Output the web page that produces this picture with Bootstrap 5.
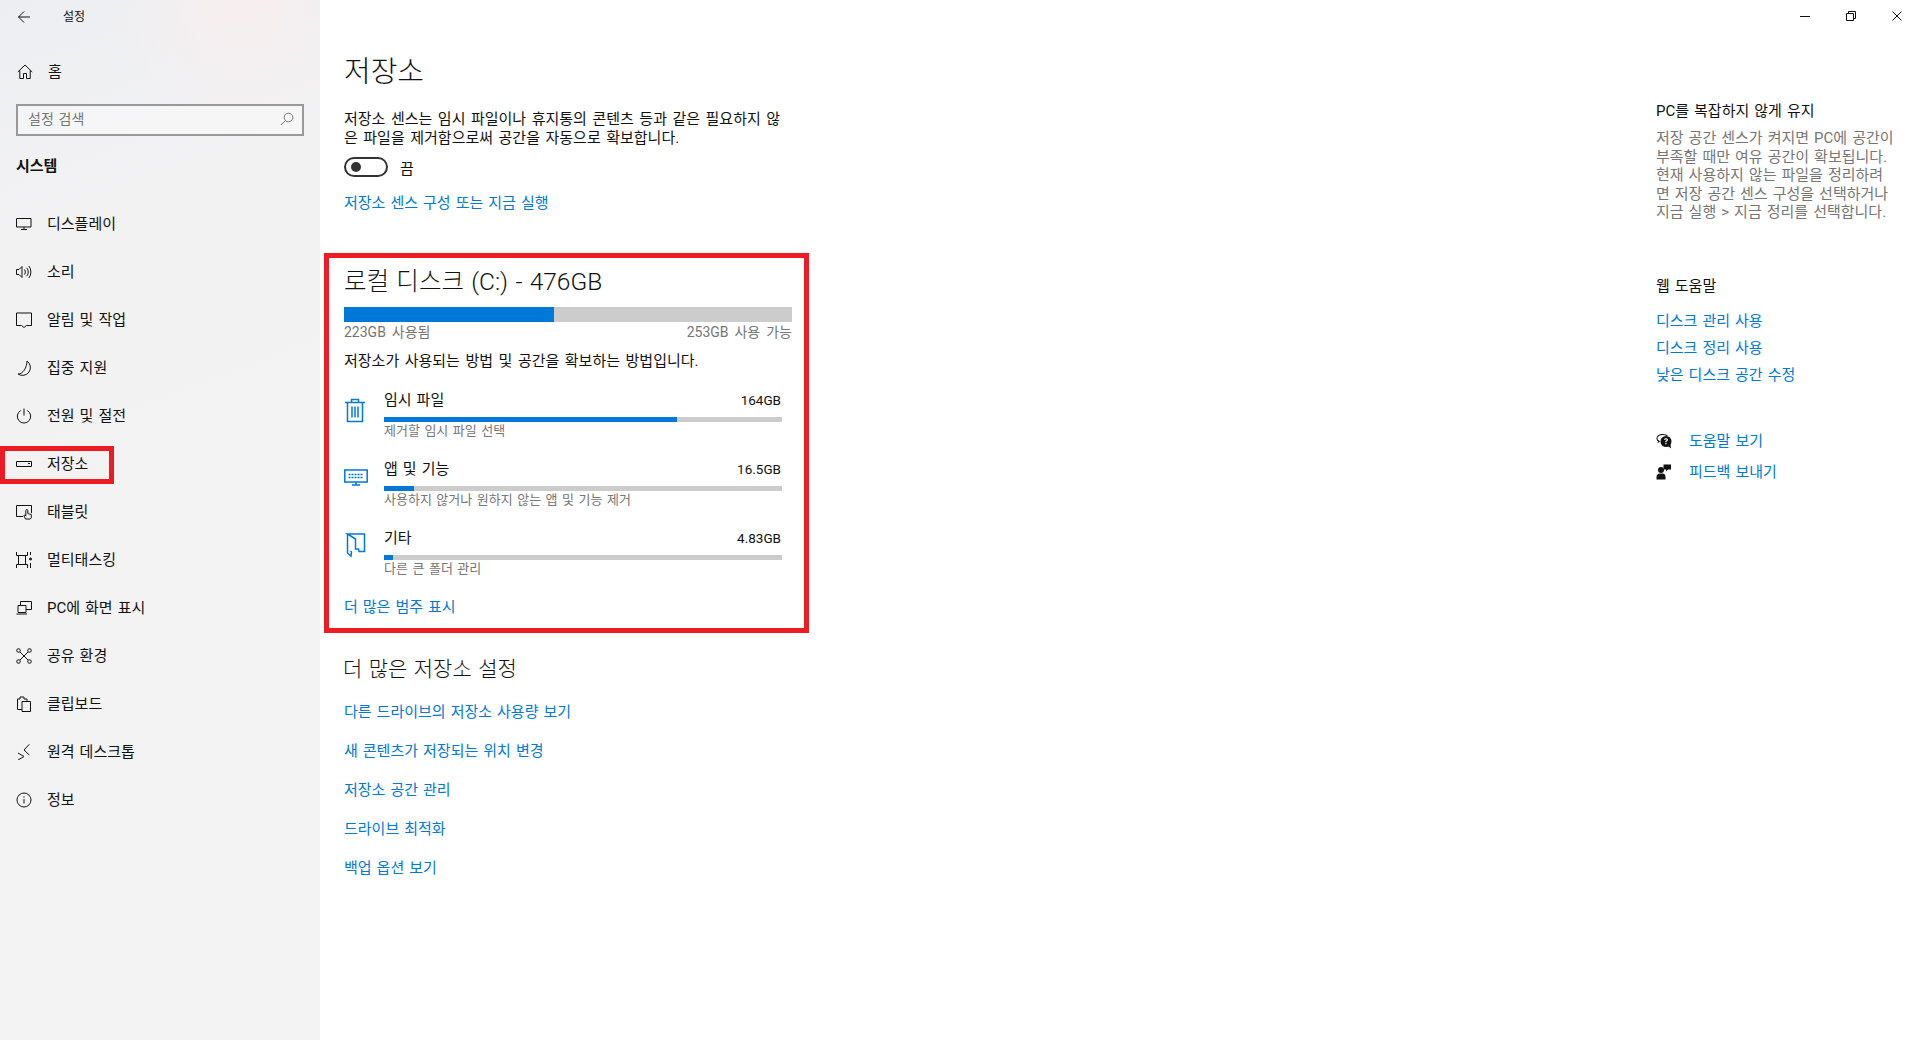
<!DOCTYPE html>
<html lang="ko">
<head>
  <meta charset="UTF-8">
  <meta name="viewport" content="width=device-width, initial-scale=1.0">
  <title>설정 - 저장소</title>
  <link href="https://cdn.jsdelivr.net/npm/bootstrap@5.3.0/dist/css/bootstrap.min.css" rel="stylesheet">
  <style>
    html, body { height: 100%; }
    body {
      height: 1040px;
      overflow: hidden;
      background: #fff;
      color: #111;
      font-family: Roboto, "Noto Sans CJK KR", sans-serif;
      font-size: 15px;
      line-height: 20px;
      word-spacing: 1.3px;
    }
    a { color: #0078d7; text-decoration: none; }
    svg { display: block; flex: none; fill: none; stroke: currentColor; stroke-width: 1; }

    /* sidebar */
    .side-pane {
      width: 320px;
      flex: none;
      padding: 0 16px;
      background:
        radial-gradient(circle at 240px 0, #f7eeee 0, rgba(247,238,238,0) 130px),
        linear-gradient(160deg, #eceef1 0, #f2f2f3 220px, #f3f3f3 100%);
    }
    .side-title { height: 32px; font-size: 12px; padding-top: 1px; }
    .side-title span { margin-left: 32px; }
    .side-title svg { margin-left: 1px; }
    .side-home { height: 48px; margin-top: 16px; margin-bottom: 8px; color: #111; }
    .side-home svg { margin-left: 1px; margin-right: 15px; }
    .side-link svg { margin-right: 15px; }
    .side-search {
      height: 32px;
      border: 2px solid #999;
      padding: 0 8px 2px 10px;
      color: #767676;
      font-size: 14px;
      background: rgba(255,255,255,.35);
    }
    .side-group { font-weight: 700; margin-top: 20px; height: 20px; margin-bottom: 24px; }
    .side-link { height: 48px; position: relative; color: #111; }
    .side-mark {
      position: absolute;
      left: -16px;
      top: 6px;
      width: 114px;
      height: 38px;
      border: 5px solid #ed1c24;
    }

    /* content */
    .main-col { width: 1336px; flex: none; padding-left: 24px; }
    .page-title { font-size: 29px; line-height: 40px; font-weight: 300; margin: 52px 0 0; }
    .intro { margin: 18px 0 0; line-height: 19px; word-spacing: 1.8px; }
    .toggle-row { margin-top: 9px; height: 20px; }
    .toggle-row span:last-child { padding-top: 3px; }
    .toggle-off {
      width: 44px;
      height: 20px;
      border: 2px solid #333;
      border-radius: 10px;
      padding-left: 5px;
      margin-right: 12px;
    }
    .toggle-off i { width: 10px; height: 10px; border-radius: 50%; background: #333; display: block; }
    .top-link { margin-top: 16px; }

    .disk-box {
      width: 485px;
      margin: 40px 0 0 -20px;
      border: 5px solid #ed1c24;
      padding: 8px 12px 11px 15px;
    }
    .disk-title { font-size: 24.5px; line-height: 32px; font-weight: 300; margin: 0; }
    .usage-bar { height: 15px; margin-top: 9px; }
    .thin-bar { height: 5px; margin-top: 7px; }
    .usage-bar, .thin-bar { background: #ccc; border-radius: 0; }
    .usage-bar .progress-bar, .thin-bar .progress-bar { background: #0078d7; }
    .usage-label { margin-top: 1px; font-size: 14px; line-height: 18px; color: #767676; word-spacing: 2.5px; }
    .usage-desc { margin: 10px 0 0; word-spacing: 1.8px; }
    .cat-list { margin-top: 19px; display: flex; flex-direction: column; gap: 19px; }
    .cat-icon { width: 40px; flex: none; color: #0078d7; }
    .cat-icon svg { stroke-width: 1.5; }
    .cat-body { width: 398px; }
    .cat-size { font-size: 13.5px; padding-right: 1px; }
    .cat-sub { font-size: 13px; line-height: 18px; color: #767676; }
    .more-link { margin-top: 19px; }

    .sub-title { font-size: 21px; line-height: 28px; font-weight: 300; margin: 22px 0 0 -1px; }
    .more-links { margin-top: 19px; gap: 19px; }

    /* right column */
    .help-col { flex-grow: 1; }
    .win-bar { height: 32px; }
    .win-btn { width: 46px; height: 32px; color: #111; }
    .tip-head { margin-top: 69px; }
    .tip-text { margin-top: 8px; line-height: 18.5px; color: #767676; }
    .web-head { margin-top: 54px; }
    .web-links { margin-top: 15px; gap: 7px; }
    .act-links { margin-top: 46px; gap: 11px; }
    .act-links svg { margin-right: 17px; fill: #111; stroke: none; }
  </style>
</head>
<body class="d-flex">

  <!-- sidebar -->
  <aside class="side-pane">
    <div class="side-title d-flex align-items-center">
      <svg width="14" height="14" viewBox="0 0 14 14"><path d="M13 7H1.500M7 1.500 1.500 7 7 12.500"/></svg>
      <span>설정</span>
    </div>
    <a class="side-home d-flex align-items-center" href="#">
      <svg width="16" height="16" viewBox="0 0 16 16"><path d="M.8 8 8 1l7.200 7M2.800 6.500v8h3.700V9.500h3v5h3.700v-8"/></svg>
      <span>홈</span>
    </a>
    <div class="side-search d-flex align-items-center justify-content-between">
      <span>설정 검색</span>
      <svg width="14" height="14" viewBox="0 0 14 14"><circle cx="8.500" cy="5.500" r="4.300"/><path d="M5.300 8.700 1 13"/></svg>
    </div>
    <div class="side-group">시스템</div>

    <nav class="d-flex flex-column">
      <a class="side-link d-flex align-items-center" href="#">
        <svg width="16" height="16" viewBox="0 0 16 16"><path d="M.5 2.500h14.500v8.500H.5zM8 11v2.500M5 13.500h6"/></svg>
        <span>디스플레이</span>
      </a>
      <a class="side-link d-flex align-items-center" href="#">
        <svg width="16" height="16" viewBox="0 0 16 16"><path d="M.5 5.500H3L6 2.500v11l-3-3H.5zM8.500 5.500a4 4 0 0 1 0 5M10.700 3.800a7 7 0 0 1 0 8.400M12.900 2a10 10 0 0 1 0 12"/></svg>
        <span>소리</span>
      </a>
      <a class="side-link d-flex align-items-center" href="#">
        <svg width="16" height="16" viewBox="0 0 16 16"><path d="M.5 1h15v12.500h-5L8 15.500l-2.500-2H.5z"/></svg>
        <span>알림 및 작업</span>
      </a>
      <a class="side-link d-flex align-items-center" href="#">
        <svg width="16" height="16" viewBox="0 0 16 16"><path d="M10 .5a7 7 0 0 1-9 13C6 13.500 10 7 10 .5z" transform="translate(1 .5)"/></svg>
        <span>집중 지원</span>
      </a>
      <a class="side-link d-flex align-items-center" href="#">
        <svg width="16" height="16" viewBox="0 0 16 16"><path d="M4.700 2.500a6.700 6.700 0 1 0 6.600 0M8 .5v7"/></svg>
        <span>전원 및 절전</span>
      </a>
      <a class="side-link d-flex align-items-center" href="#">
        <svg width="16" height="16" viewBox="0 0 16 16"><path d="M.5 5.500h15v5H.5zM12 7.500h2"/></svg>
        <span>저장소</span>
        <span class="side-mark"></span>
      </a>
      <a class="side-link d-flex align-items-center" href="#">
        <svg width="16" height="16" viewBox="0 0 16 16"><path d="M7 12.500H.5v-11h15V9M9.500 15 7.800 11.500l1-.5 1 1V6.500a1 1 0 0 1 2 0v3l3.500 1v3l-1 1.500z"/></svg>
        <span>태블릿</span>
      </a>
      <a class="side-link d-flex align-items-center" href="#">
        <svg width="16" height="16" viewBox="0 0 16 16"><path d="M.5 0v3.500h11V0M.5 16v-3.500h11V16M2.500 3.500v9M9.500 3.500v9M14.500 0v3M14.500 11v5"/><circle cx="14.500" cy="7" r="1" fill="currentColor"/></svg>
        <span>멀티태스킹</span>
      </a>
      <a class="side-link d-flex align-items-center" href="#">
        <svg width="16" height="16" viewBox="0 0 16 16"><path d="M4.500 5V1.500h11v8H10M2 5.500h8v7H2zM.5 14h10.500"/></svg>
        <span>PC에 화면 표시</span>
      </a>
      <a class="side-link d-flex align-items-center" href="#">
        <svg width="16" height="16" viewBox="0 0 16 16"><circle cx="2.500" cy="2.500" r="1.800"/><circle cx="13.500" cy="2.500" r="1.800"/><circle cx="2.500" cy="13.500" r="1.800"/><circle cx="13.500" cy="13.500" r="1.800"/><path d="M3.800 3.800l8.400 8.400M12.200 3.800l-8.400 8.400"/></svg>
        <span>공유 환경</span>
      </a>
      <a class="side-link d-flex align-items-center" href="#">
        <svg width="16" height="16" viewBox="0 0 16 16"><path d="M6 13.500H1.500V3H4V1h4v2h3v2.500M6 5.500h8.500v10H6z"/></svg>
        <span>클립보드</span>
      </a>
      <a class="side-link d-flex align-items-center" href="#">
        <svg width="16" height="16" viewBox="0 0 16 16"><path d="M2 9l6 3.500L2 16M13.300.3 8 6l5.300 5"/></svg>
        <span>원격 데스크톱</span>
      </a>
      <a class="side-link d-flex align-items-center" href="#">
        <svg width="16" height="16" viewBox="0 0 16 16"><circle cx="8" cy="8" r="7"/><path d="M8 7v4.500M8 4.200v1.300"/></svg>
        <span>정보</span>
      </a>
    </nav>
  </aside>

  <!-- content -->
  <main class="main-col">
    <h1 class="page-title">저장소</h1>
    <p class="intro">저장소 센스는 임시 파일이나 휴지통의 콘텐츠 등과 같은 필요하지 않<br>은 파일을 제거함으로써 공간을 자동으로 확보합니다.</p>
    <div class="toggle-row d-flex align-items-center">
      <span class="toggle-off d-flex align-items-center"><i></i></span>
      <span>끔</span>
    </div>
    <div class="top-link"><a href="#">저장소 센스 구성 또는 지금 실행</a></div>

    <section class="disk-box">
      <h2 class="disk-title">로컬 디스크 (C:) - 476GB</h2>
      <div class="progress usage-bar"><div class="progress-bar" style="width:46.900%"></div></div>
      <div class="usage-label d-flex justify-content-between">
        <span>223GB 사용됨</span>
        <span>253GB 사용 가능</span>
      </div>
      <p class="usage-desc">저장소가 사용되는 방법 및 공간을 확보하는 방법입니다.</p>

      <div class="cat-list">
        <div class="d-flex">
          <div class="cat-icon">
            <svg class="mt-2" width="22" height="26" viewBox="0 0 22 26"><path d="M1 4.500h20M7.500 4.500V1.500h7v3M3.500 4.500v19h15v-19M8 8.500v11M11 8.500v11M14 8.500v11"/></svg>
          </div>
          <div class="cat-body">
            <div class="d-flex justify-content-between"><span>임시 파일</span><span class="cat-size">164GB</span></div>
            <div class="progress thin-bar"><div class="progress-bar" style="width:73.600%"></div></div>
            <div class="cat-sub">제거할 임시 파일 선택</div>
          </div>
        </div>
        <div class="d-flex">
          <div class="cat-icon">
            <svg class="mt-2" width="24" height="20" viewBox="0 0 24 20"><path d="M.8 3h22.400v12H.8zM12 15v3M8 18h8"/><path stroke-dasharray="2 1" d="M4.500 7.500h15M4.500 10.500h15"/></svg>
          </div>
          <div class="cat-body">
            <div class="d-flex justify-content-between"><span>앱 및 기능</span><span class="cat-size">16.5GB</span></div>
            <div class="progress thin-bar"><div class="progress-bar" style="width:7.500%"></div></div>
            <div class="cat-sub">사용하지 않거나 원하지 않는 앱 및 기능 제거</div>
          </div>
        </div>
        <div class="d-flex">
          <div class="cat-icon">
            <svg class="mt-1" width="22" height="26" viewBox="0 0 22 26"><path d="M3.500 2v19l3.500 3 .5-4-1-1M3.500 2H20.500v17.500h-5.500l-.5-2.500H11.500V7L3.500 2z"/></svg>
          </div>
          <div class="cat-body">
            <div class="d-flex justify-content-between"><span>기타</span><span class="cat-size">4.83GB</span></div>
            <div class="progress thin-bar"><div class="progress-bar" style="width:2.300%"></div></div>
            <div class="cat-sub">다른 큰 폴더 관리</div>
          </div>
        </div>
      </div>
      <div class="more-link"><a href="#">더 많은 범주 표시</a></div>
    </section>

    <h3 class="sub-title">더 많은 저장소 설정</h3>
    <div class="more-links d-flex flex-column align-items-start">
      <a href="#">다른 드라이브의 저장소 사용량 보기</a>
      <a href="#">새 콘텐츠가 저장되는 위치 변경</a>
      <a href="#">저장소 공간 관리</a>
      <a href="#">드라이브 최적화</a>
      <a href="#">백업 옵션 보기</a>
    </div>
  </main>

  <!-- right column -->
  <div class="help-col">
    <div class="win-bar d-flex justify-content-end">
      <div class="win-btn d-flex align-items-center justify-content-center">
        <svg width="10" height="10" viewBox="0 0 10 10"><path d="M0 5.500h10"/></svg>
      </div>
      <div class="win-btn d-flex align-items-center justify-content-center">
        <svg width="10" height="10" viewBox="0 0 10 10"><path d="M.5 2.500h7v7h-7zM2.500 2.500v-2h7v7h-2"/></svg>
      </div>
      <div class="win-btn d-flex align-items-center justify-content-center">
        <svg width="10" height="10" viewBox="0 0 10 10"><path d="M.5.500l9 9M9.500.500l-9 9"/></svg>
      </div>
    </div>
    <div class="tip-head">PC를 복잡하지 않게 유지</div>
    <div class="tip-text">저장 공간 센스가 켜지면 PC에 공간이<br>부족할 때만 여유 공간이 확보됩니다.<br>현재 사용하지 않는 파일을 정리하려<br>면 저장 공간 센스 구성을 선택하거나<br>지금 실행 &gt; 지금 정리를 선택합니다.</div>
    <div class="web-head">웹 도움말</div>
    <div class="web-links d-flex flex-column align-items-start">
      <a href="#">디스크 관리 사용</a>
      <a href="#">디스크 정리 사용</a>
      <a href="#">낮은 디스크 공간 수정</a>
    </div>
    <div class="act-links d-flex flex-column align-items-start">
      <a class="d-flex align-items-center" href="#">
        <svg width="16" height="16" viewBox="0 0 16 16"><path d="M7 1C3 1 .5 3 .5 5.500c0 1.200.6 2.200 1.500 3L1.500 10l2-1 .5.200v-1l-.8.400.2-.8C2.400 7 1.500 6.400 1.500 5.500 1.500 3.500 4 2 7 2c1.400 0 2.600.3 3.500 1H12C11 1.800 9.200 1 7 1z"/><circle cx="10" cy="8.500" r="5.500"/><path d="M12 13l3 2.500-.5-4z"/><path fill="#fff" d="M9.300 10h1.200v1.300H9.300zM8 6.800C8 5.800 8.900 5.200 10 5.200s2 .6 2 1.600c0 .9-.6 1.200-1.100 1.500-.3.200-.4.400-.4.900H9.300c0-.9.200-1.300.8-1.700.4-.2.700-.4.700-.7 0-.3-.3-.5-.8-.5s-.8.200-.8.700z"/></svg>
        <span>도움말 보기</span>
      </a>
      <a class="d-flex align-items-center" href="#">
        <svg width="16" height="16" viewBox="0 0 16 16"><circle cx="5" cy="6" r="3"/><path d="M.5 15.500v-2.500C.5 10.800 2 9.500 4 9.500h2.500c2 0 3 1.300 3 3.500v2.500zM7.500 .5h7.500v5H12l-2 2v-2H7.500z"/></svg>
        <span>피드백 보내기</span>
      </a>
    </div>
  </div>

  <script src="https://cdn.jsdelivr.net/npm/bootstrap@5.3.0/dist/js/bootstrap.bundle.min.js"></script>
</body>
</html>
